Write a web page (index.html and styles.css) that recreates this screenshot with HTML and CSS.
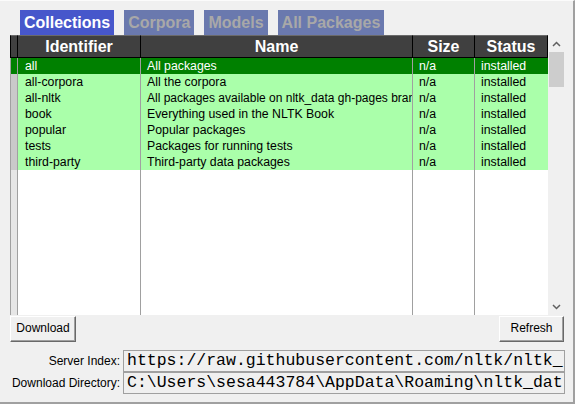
FILE: index.html
```html
<!DOCTYPE html>
<html>
<head>
<meta charset="utf-8">
<link rel="stylesheet" href="styles.css">
</head>
<body>
<div class="window">
  <div class="tabs">
    <div class="tab active">Collections</div>
    <div class="tab">Corpora</div>
    <div class="tab">Models</div>
    <div class="tab">All Packages</div>
  </div>
  <div class="table">
    <div class="col col-mark">
      <div class="head"></div>
      <div class="body">
        <div class="row sel"></div>
        <div class="row"></div>
        <div class="row"></div>
        <div class="row"></div>
        <div class="row"></div>
        <div class="row"></div>
        <div class="row"></div>
      </div>
    </div>
    <div class="col col-id">
      <div class="head">Identifier</div>
      <div class="body">
        <div class="row sel">all</div>
        <div class="row">all-corpora</div>
        <div class="row">all-nltk</div>
        <div class="row">book</div>
        <div class="row">popular</div>
        <div class="row">tests</div>
        <div class="row">third-party</div>
      </div>
    </div>
    <div class="col col-name">
      <div class="head">Name</div>
      <div class="body">
        <div class="row sel">All packages</div>
        <div class="row">All the corpora</div>
        <div class="row tight">All packages available on nltk_data gh-pages bran</div>
        <div class="row">Everything used in the NLTK Book</div>
        <div class="row">Popular packages</div>
        <div class="row">Packages for running tests</div>
        <div class="row">Third-party data packages</div>
      </div>
    </div>
    <div class="col col-size">
      <div class="head">Size</div>
      <div class="body">
        <div class="row sel">n/a</div>
        <div class="row">n/a</div>
        <div class="row">n/a</div>
        <div class="row">n/a</div>
        <div class="row">n/a</div>
        <div class="row">n/a</div>
        <div class="row">n/a</div>
      </div>
    </div>
    <div class="col col-status">
      <div class="head">Status</div>
      <div class="body">
        <div class="row sel">installed</div>
        <div class="row">installed</div>
        <div class="row">installed</div>
        <div class="row">installed</div>
        <div class="row">installed</div>
        <div class="row">installed</div>
        <div class="row">installed</div>
      </div>
    </div>
    <div class="scrollbar">
      <div class="arrow">
        <svg width="9" height="6" viewBox="0 0 9 6"><path d="M1 5 L4.5 1.5 L8 5" fill="none" stroke="#606060" stroke-width="1.5"/></svg>
      </div>
      <div class="thumb"></div>
      <div class="track"></div>
      <div class="arrow">
        <svg width="9" height="6" viewBox="0 0 9 6"><path d="M1 1 L4.5 4.5 L8 1" fill="none" stroke="#606060" stroke-width="1.5"/></svg>
      </div>
    </div>
  </div>
  <div class="buttons">
    <div class="btn btn-download">Download</div>
    <div class="btn btn-refresh">Refresh</div>
  </div>
  <div class="fields">
    <div class="label">Server Index:</div>
    <div class="entry">https://raw.githubusercontent.com/nltk/nltk_</div>
    <div class="label">Download Directory:</div>
    <div class="entry">C:\Users\sesa443784\AppData\Roaming\nltk_dat</div>
  </div>
</div>
</body>
</html>
```
FILE: styles.css
```css
html, body {
  margin: 0;
  padding: 0;
  background: #f0f0f0;
}
.window {
  width: 575px;
  height: 404px;
  box-sizing: border-box;
  border-right: 2px solid #a0a0a0;
  border-bottom: 2px solid #a0a0a0;
  border-top: 1px solid #fbfbfb;
  padding: 9px 0 0 10px;
  display: flex;
  flex-direction: column;
  font-family: "Liberation Sans", Arial, sans-serif;
  font-size: 12px;
  color: #000;
}
.tabs {
  display: flex;
  gap: 10px;
  margin-left: 10px;
  height: 25px;
}
.tab {
  background: #6a79ae;
  color: #a8a8a8;
  font-weight: bold;
  font-size: 16px;
  line-height: 25px;
  padding: 0 4px;
}
.tab.active {
  background: #4757cb;
  color: #ffffff;
}
.table {
  display: flex;
  height: 280px;
  width: 555px;
}
.col {
  display: flex;
  flex-direction: column;
  box-sizing: border-box;
}
.head {
  height: 23px;
  box-sizing: border-box;
  background: #404040;
  border-top: 1px solid #6a6a6a;
  border-right: 1px solid #000;
  border-bottom: 1px solid #000;
  color: #fff;
  font-weight: bold;
  font-size: 16px;
  line-height: 21px;
  text-align: center;
  white-space: nowrap;
  overflow: hidden;
}
.body {
  flex: 1;
  background: #fff;
  border-right: 1px solid #a0a0a0;
  overflow: hidden;
}
.row {
  height: 16px;
  line-height: 16px;
  font-size: 12.3px;
  background: #aaffaa;
  padding-left: 6px;
  white-space: nowrap;
  overflow: hidden;
}
.row.tight {
  font-size: 12px;
}
.row.sel {
  background: #008000;
  color: #fff;
}
.col-mark { width: 8px; }
.col-mark .head { border-left: 1px solid #000; }
.col-mark .body {
  background: #e6e6e6;
  border-left: 1px solid #a0a0a0;
}
.col-mark .row {
  background: #c9c9c9;
  padding: 0;
}
.col-mark .row.sel { background: #008000; }
.col-id { width: 123px; }
.col-id .row { padding-left: 7px; }
.col-name { width: 272px; }
.col-size { width: 62px; }
.col-status { width: 73px; }
.col-status .body { border-right: none; }
.scrollbar {
  width: 17px;
  display: flex;
  flex-direction: column;
  background: #f0f0f0;
}
.arrow {
  height: 17px;
  display: flex;
  align-items: center;
  justify-content: center;
}
.thumb {
  height: 35px;
  margin: 0 1px;
  background: #cdcdcd;
}
.track { flex: 1; }
.buttons {
  display: flex;
  justify-content: space-between;
  width: 555px;
  margin-top: 1px;
  height: 26px;
}
.btn {
  box-sizing: border-box;
  height: 26px;
  background: #f0f0f0;
  border: 1px solid;
  border-color: #ffffff #696969 #696969 #ffffff;
  box-shadow: inset -1px -1px 0 #a0a0a0;
  line-height: 23px;
  text-align: center;
}
.btn-download { width: 66px; }
.btn-refresh { width: 65px; margin-right: 1px; }
.fields {
  display: grid;
  grid-template-columns: 110px 442px;
  column-gap: 3px;
  margin-top: 8px;
}
.label {
  text-align: right;
  height: 22px;
  line-height: 22px;
  white-space: nowrap;
}
.entry {
  height: 22px;
  box-sizing: border-box;
  border: 1px solid #a0a0a0;
  background: #f0f0f0;
  font-family: "Liberation Mono", "Courier New", monospace;
  font-size: 16.5px;
  line-height: 20px;
  padding-left: 3px;
  white-space: nowrap;
  overflow: hidden;
}
```
